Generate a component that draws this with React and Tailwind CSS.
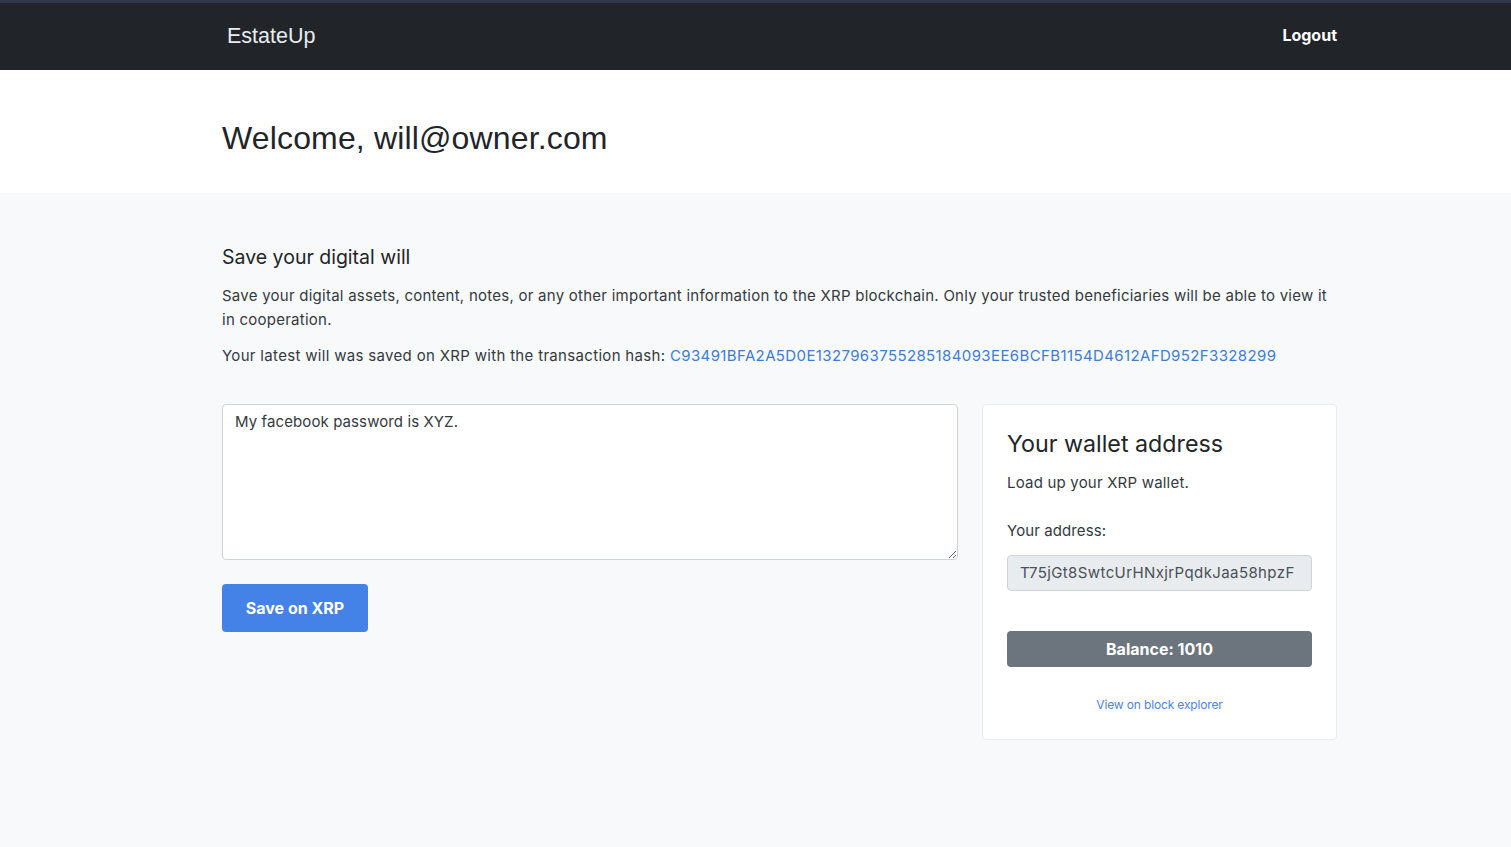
export default function App() {
  const body = { fontFamily: 'Inter, "Noto Sans", sans-serif' };
  const arial = { fontFamily: '"Liberation Sans", Arial, sans-serif' };
  return (
    <div className="min-h-[847px] bg-[#f8f9fa] text-[#343a40]" style={body}>
      <div className="h-[3px] bg-[#33364a]" />
      <nav className="h-[67px] bg-[#212529]">
        <div className="ml-[222px] w-[1115px] h-full flex items-center justify-between">
          <span className="pl-[5px] pb-[1px] text-[21.5px] text-[#e9ecef]" style={arial}>EstateUp</span>
          <span className="text-[16px] font-bold text-white pb-[3px]">Logout</span>
        </div>
      </nav>
      <header className="bg-white h-[123px] flex items-center">
        <div className="ml-[222px] w-[1115px]">
          <h1 className="text-[32px] leading-none pt-[12px] text-[#212529] tracking-[0.15px]" style={arial}>Welcome, will@owner.com</h1>
        </div>
      </header>
      <main className="ml-[222px] w-[1115px] pt-[52px]">
        <h2 className="text-[19.5px] leading-[24px] text-[#212529]">Save your digital will</h2>
        <p className="mt-[15px] text-[15px] leading-[24px] tracking-[0.25px]">
          Save your digital assets, content, notes, or any other important information to the XRP blockchain. Only your trusted beneficiaries will be able to view it in cooperation.
        </p>
        <p className="mt-[12px] text-[15px] leading-[24px] tracking-[0.32px]">
          Your latest will was saved on XRP with the transaction hash:{" "}
          <a className="text-[#3b7ddd] tracking-[0.38px]">C93491BFA2A5D0E1327963755285184093EE6BCFB1154D4612AFD952F3328299</a>
        </p>
        <div className="mt-[36px] flex gap-[24px] items-start">
          <div className="w-[736px]">
            <textarea
              className="block w-full h-[156px] bg-white border border-[#ced4da] rounded-[4px] px-[12px] py-[5px] text-[15px] leading-[24px] text-[#343a40] outline-none tracking-[0.1px]"
              defaultValue="My facebook password is XYZ."
              style={body}
            />
            <button className="mt-[24px] h-[48px] w-[146px] rounded-[4px] bg-[#4582e8] text-white font-bold text-[16px]">Save on XRP</button>
          </div>
          <div className="w-[355px] h-[336px] bg-white border border-[#e9ecef] rounded-[4px] px-[24px] pt-[24px]">
            <h3 className="text-[23.25px] leading-[30px] text-[#212529]">Your wallet address</h3>
            <p className="mt-[12px] text-[15px] leading-[24px] tracking-[0.2px]">Load up your XRP wallet.</p>
            <p className="mt-[24px] text-[15px] leading-[24px] tracking-[0.1px]">Your address:</p>
            <div className="mt-[12px] h-[36px] bg-[#e9ecef] border border-[#ced4da] rounded-[4px] px-[12px] flex items-center text-[15px] text-[#495057] tracking-[0.4px]">T75jGt8SwtcUrHNxjrPqdkJaa58hpzF</div>
            <div className="mt-[40px] h-[36px] bg-[#6c757d] rounded-[4px] flex items-center justify-center text-white font-bold text-[16px] pb-[1px]">Balance: 1010</div>
            <div className="mt-[29px] text-center text-[12px] text-[#4a84e8] tracking-[-0.15px]">View on block explorer</div>
          </div>
        </div>
      </main>
    </div>
  );
}
